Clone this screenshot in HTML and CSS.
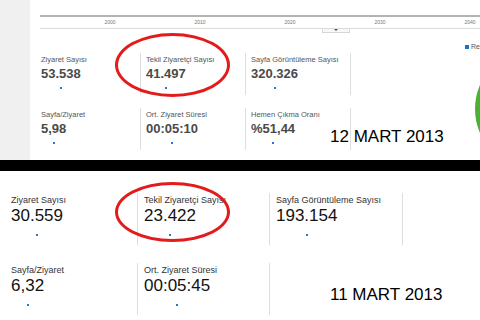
FILE: index.html
```html
<!DOCTYPE html>
<html lang="tr">
<head>
    <meta charset="UTF-8">
    <title>Ziyaret Karşılaştırma</title>
    <link rel="stylesheet" href="styles.css">
</head>
<body>
    <div class="shot shot-top">
        <div class="side"></div>
        <div class="main">
            <div class="axis">
                <span>2000</span>
                <span>2010</span>
                <span>2020</span>
                <span>2030</span>
                <span>2040</span>
                <div class="handle"></div>
            </div>
            <div class="grid-top">
                <div class="cell first">
                    <div class="label">Ziyaret Sayısı</div>
                    <div class="fig"><span class="value">53.538</span><span class="dot"></span></div>
                </div>
                <div class="cell">
                    <div class="label">Tekil Ziyaretçi Sayısı</div>
                    <div class="fig"><span class="value">41.497</span><span class="dot"></span></div>
                </div>
                <div class="cell">
                    <div class="label">Sayfa Görüntüleme Sayısı</div>
                    <div class="fig"><span class="value">320.326</span><span class="dot"></span></div>
                </div>
                <div class="cell empty"></div>
                <div class="chart">
                    <div class="legend"><span class="sq"></span>Re</div>
                    <div class="pie"></div>
                </div>
                <div class="cell first">
                    <div class="label">Sayfa/Ziyaret</div>
                    <div class="fig"><span class="value">5,98</span><span class="dot"></span></div>
                </div>
                <div class="cell">
                    <div class="label">Ort. Ziyaret Süresi</div>
                    <div class="fig"><span class="value">00:05:10</span><span class="dot"></span></div>
                </div>
                <div class="cell">
                    <div class="label">Hemen Çıkma Oranı</div>
                    <div class="fig"><span class="value">%51,44</span><span class="dot"></span></div>
                </div>
                <div class="cell empty"></div>
            </div>
        </div>
        <div class="date date-top">12 MART 2013</div>
        <div class="ring ring-top"></div>
    </div>

    <div class="divider"></div>

    <div class="shot shot-bottom">
        <div class="grid-bottom">
            <div class="cell first">
                <div class="label">Ziyaret Sayısı</div>
                <div class="fig"><span class="value">30.559</span><span class="dot"></span></div>
            </div>
            <div class="cell">
                <div class="label">Tekil Ziyaretçi Sayısı</div>
                <div class="fig"><span class="value">23.422</span><span class="dot"></span></div>
            </div>
            <div class="cell">
                <div class="label">Sayfa Görüntüleme Sayısı</div>
                <div class="fig"><span class="value">193.154</span><span class="dot"></span></div>
            </div>
            <div class="cell empty"></div>
            <div class="cell first">
                <div class="label">Sayfa/Ziyaret</div>
                <div class="fig"><span class="value">6,32</span><span class="dot"></span></div>
            </div>
            <div class="cell">
                <div class="label">Ort. Ziyaret Süresi</div>
                <div class="fig"><span class="value">00:05:45</span><span class="dot"></span></div>
            </div>
            <div class="cell empty"></div>
        </div>
        <div class="date date-bottom">11 MART 2013</div>
        <div class="ring ring-bottom"></div>
    </div>
</body>
</html>
```

FILE: styles.css
```css
body {
    margin: 0;
    width: 480px;
    height: 320px;
    overflow: hidden;
    background: #fff;
    font-family: "Liberation Sans", Arial, sans-serif;
}
.shot {
    position: relative;
    overflow: hidden;
}
.shot-top {
    display: flex;
    height: 160px;
}
.side {
    width: 30px;
    flex-shrink: 0;
    background: #f0f0f0;
}
.main {
    flex: 1;
}
.axis {
    position: relative;
    display: flex;
    height: 11px;
    margin: 15px 0 0 10px;
    padding-left: 25px;
    border-top: 2px solid #b3b3b3;
    border-bottom: 1px solid #dcdcdc;
    font-size: 5px;
    line-height: 11px;
    color: #777;
}
.axis span {
    width: 90px;
    flex-shrink: 0;
    text-align: center;
}
.handle {
    position: absolute;
    left: 282px;
    top: 12px;
    width: 26px;
    height: 3px;
    border: 1px solid #d6d6d6;
    border-top: none;
    background: #f7f7f7;
}
.handle::after {
    content: "";
    position: absolute;
    left: 11px;
    top: 0;
    border-left: 2px solid transparent;
    border-right: 2px solid transparent;
    border-top: 2px solid #555;
}
.grid-top {
    display: grid;
    grid-template-columns: 99px 105px 105px 105px 1fr;
    grid-template-rows: 42px 42px;
    row-gap: 13px;
    margin: 24px 0 0 11px;
}
.cell {
    border-left: 1px solid #dedede;
    padding-left: 5px;
}
.cell.first {
    border-left: none;
    padding-left: 0;
}
.grid-top .label {
    padding-top: 2px;
    font-size: 7.5px;
    line-height: 9px;
    color: #555;
}
.fig {
    display: inline-flex;
    flex-direction: column;
    align-items: center;
}
.grid-top .value {
    font-size: 13px;
    line-height: 15px;
    font-weight: bold;
    color: #4a4a4a;
}
.dot {
    width: 2px;
    height: 2px;
    background: #2a74d2;
}
.grid-top .dot {
    margin-top: 6px;
}
.chart {
    grid-row: span 2;
    padding: 0 0 0 10px;
}
.legend {
    margin-top: -10px;
    font-size: 7px;
    line-height: 8px;
    color: #555;
    white-space: nowrap;
}
.sq {
    display: inline-block;
    width: 4px;
    height: 4px;
    margin-right: 2px;
    background: #1a73c8;
}
.pie {
    width: 120px;
    height: 120px;
    margin: -2px 0 0 10px;
    border-radius: 50%;
    background: #4cb034;
}
.divider {
    height: 11px;
    background: #000;
}
.shot-bottom {
    height: 149px;
}
.grid-bottom {
    display: grid;
    grid-template-columns: 126px 132px 133px 1fr;
    grid-template-rows: 52px 52px;
    row-gap: 18px;
    padding: 22px 0 0 11px;
}
.grid-bottom .cell {
    padding-left: 6px;
}
.grid-bottom .cell.first {
    padding-left: 0;
}
.grid-bottom .label {
    padding-top: 2px;
    font-size: 9px;
    line-height: 11px;
    color: #333;
}
.grid-bottom .value {
    font-size: 17px;
    line-height: 20px;
    color: #111;
}
.grid-bottom .dot {
    margin-top: 8px;
}
.date {
    position: absolute;
    left: 330px;
    font-size: 17px;
    line-height: 20px;
    color: #000;
}
.date-top {
    top: 127px;
}
.date-bottom {
    top: 114px;
}
.ring {
    position: absolute;
    left: 115px;
    width: 109px;
    border: 3px solid #e31b1b;
    border-radius: 50%;
}
.ring-top {
    top: 33px;
    height: 58px;
}
.ring-bottom {
    top: 11px;
    height: 54px;
}
```
